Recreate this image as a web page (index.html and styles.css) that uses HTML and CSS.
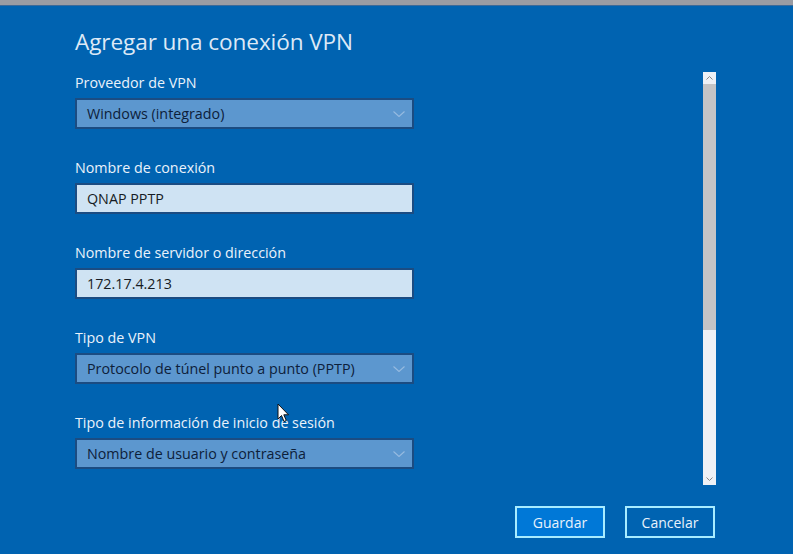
FILE: index.html
```html
<!DOCTYPE html>
<html lang="es">
<head>
    <meta charset="UTF-8">
    <meta name="viewport" content="width=device-width, initial-scale=1.0">
    <title>Agregar una conexión VPN</title>
    <link rel="stylesheet" href="styles.css">
</head>
<body>
    <div class="titlebar"></div>

    <div class="dialog">
        <h1>Agregar una conexión VPN</h1>

        <div class="content">
            <div class="form">
                <div class="field">
                    <label>Proveedor de VPN</label>
                    <div class="select">
                        <span>Windows (integrado)</span>
                        <svg class="chevron" width="12" height="6" viewBox="0 0 12 6"><path d="M0.5 0.5 L6 5.5 L11.5 0.5" fill="none" stroke="currentColor" stroke-width="1.1"/></svg>
                    </div>
                </div>

                <div class="field">
                    <label>Nombre de conexión</label>
                    <div class="input">QNAP PPTP</div>
                </div>

                <div class="field">
                    <label>Nombre de servidor o dirección</label>
                    <div class="input">172.17.4.213</div>
                </div>

                <div class="field">
                    <label>Tipo de VPN</label>
                    <div class="select">
                        <span>Protocolo de túnel punto a punto (PPTP)</span>
                        <svg class="chevron" width="12" height="6" viewBox="0 0 12 6"><path d="M0.5 0.5 L6 5.5 L11.5 0.5" fill="none" stroke="currentColor" stroke-width="1.1"/></svg>
                    </div>
                </div>

                <div class="field">
                    <label>Tipo de información de inicio de sesión</label>
                    <div class="select">
                        <span>Nombre de usuario y contraseña</span>
                        <svg class="chevron" width="12" height="6" viewBox="0 0 12 6"><path d="M0.5 0.5 L6 5.5 L11.5 0.5" fill="none" stroke="currentColor" stroke-width="1.1"/></svg>
                    </div>
                </div>

                <!-- mouse pointer -->
                <svg class="cursor" width="13" height="20" viewBox="0 0 13 20">
                    <path d="M1 1 L1 16 L4.5 12.5 L7 18.5 L9.3 17.5 L6.8 11.8 L11.5 11.8 Z" fill="#fff" stroke="#111" stroke-width="1"/>
                </svg>
            </div>

            <div class="scrollbar">
                <div class="scroll-btn">
                    <svg width="7" height="4" viewBox="0 0 7 4"><path d="M0.5 3.5 L3.5 0.5 L6.5 3.5" fill="none" stroke="#888" stroke-width="1"/></svg>
                </div>
                <div class="thumb"></div>
                <div class="track"></div>
                <div class="scroll-btn down">
                    <svg width="7" height="4" viewBox="0 0 7 4"><path d="M0.5 0.5 L3.5 3.5 L6.5 0.5" fill="none" stroke="#888" stroke-width="1"/></svg>
                </div>
            </div>
        </div>

        <div class="actions">
            <button class="primary">Guardar</button>
            <button>Cancelar</button>
        </div>
    </div>
</body>
</html>
```

FILE: styles.css
```css
body {
    margin: 0;
    height: 554px;
    overflow: hidden;
    background-color: #0063b1;
    font-family: "Open Sans", "Noto Sans", sans-serif;
    color: #e6f0fa;
}

.titlebar {
    height: 5px;
    background-color: #9a9ca3;
    border-bottom: 1px solid #3d6a98;
}

.dialog {
    padding: 21px 77px 0 75px;
}

h1 {
    font-size: 22.6px;
    font-weight: 400;
    line-height: 30px;
    margin: 0 0 15px 0;
    color: #dde9f6;
    letter-spacing: -0.1px;
}

.content {
    display: flex;
    justify-content: space-between;
}

.form {
    position: relative;
    width: 339px;
}

.field {
    margin-bottom: 29px;
}

.field:last-of-type {
    margin-bottom: 0;
}

.field label {
    display: block;
    font-size: 14.3px;
    line-height: 20px;
    margin: 1px 0 5px 0;
    color: #eaf2fb;
}

.select,
.input {
    box-sizing: border-box;
    height: 31px;
    border: 2px solid #1b4c82;
    display: flex;
    align-items: center;
    padding: 0 7px 0 10px;
    font-size: 14.3px;
}

.select {
    background-color: #5c97cf;
    color: #0d203a;
    justify-content: space-between;
}

.input {
    background-color: #cfe3f3;
    color: #161c24;
}

.chevron {
    color: #97bbe0;
}

.cursor {
    position: absolute;
    left: 202px;
    top: 331px;
}

.scrollbar {
    width: 13px;
    height: 413px;
    display: flex;
    flex-direction: column;
    background-color: #eef1f6;
}

.scroll-btn {
    height: 12px;
    display: flex;
    align-items: center;
    justify-content: center;
    background-color: #eef1f6;
}

.thumb {
    height: 246px;
    background-color: #c4c4c6;
}

.track {
    flex: 1;
}

.actions {
    display: flex;
    justify-content: flex-end;
    gap: 20px;
    margin-top: 21px;
    padding-right: 1px;
}

.actions button {
    width: 90px;
    height: 32px;
    border: 2px solid #a8ecff;
    background-color: #0063b1;
    color: #e8f2fc;
    font-family: "Open Sans", "Noto Sans", sans-serif;
    font-size: 14px;
    padding: 0;
}

.actions button.primary {
    background-color: #0078d7;
}
```
